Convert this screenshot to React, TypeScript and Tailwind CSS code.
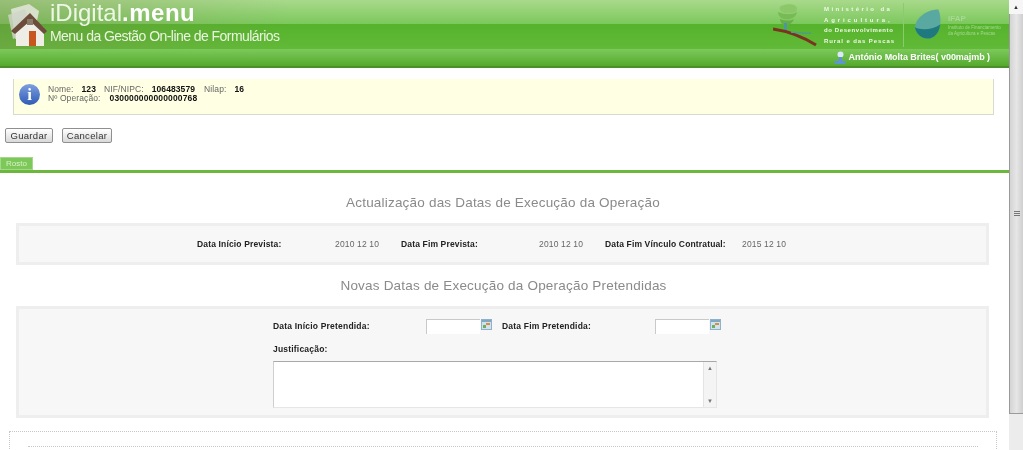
import React from "react";

const HouseLogo = () => (
  <svg width="44" height="48" viewBox="0 0 44 48" className="shrink-0">
    <path d="M6 8 L24 3 L34 10 L30 30 L10 38 Z" fill="#e4e6dc" opacity="0.85" />
    <path d="M3 14 L20 8 L26 30 L8 38 Z" fill="#cfd4c8" opacity="0.8" />
    <path d="M11 27 L11 45 L39 45 L39 27 L25 15 Z" fill="#efeee6" />
    <path d="M6 30 L25 12 L42 30 L39 33 L25 20 L10 33 Z" fill="#6d4c3c" />
    <rect x="22" y="18" width="6" height="6" fill="#8a7a6a" />
    <rect x="24" y="30" width="7" height="15" fill="#c8571f" />
  </svg>
);

const TreeLogo = () => (
  <svg width="45" height="44" viewBox="0 0 45 44" className="shrink-0">
    <path d="M8 3 C16 0 24 1 24 6 C24 10 18 11 12 10 C7 9 5 5 8 3 Z" fill="#8cc86a" />
    <path d="M5 9 C12 12 20 12 24 9 C23 15 17 17 11 16 C7 15 5 12 5 9 Z" fill="#78bb55" />
    <path d="M7 16 C12 18 18 18 21 16 C19 21 15 23 11 22 C9 21 7 19 7 16 Z" fill="#68ad4c" />
    <rect x="11" y="20" width="3" height="8" fill="#4f97a0" />
    <path d="M0 26 C14 28 30 34 43 42" stroke="#7a3320" strokeWidth="3" fill="none" />
    <path d="M18 29 C26 30 32 31 38 30" stroke="#4f9c88" strokeWidth="1.5" fill="none" />
  </svg>
);

const IfapLogo = () => (
  <svg width="30" height="33" viewBox="0 0 32 34" className="shrink-0">
    <path d="M2 20 C3 10 14 1 27 1 C31 10 30 24 22 30 C14 35 4 30 2 20 Z" fill="#5aa9a0" />
    <path d="M2 20 C10 24 22 22 29 17 C28 24 26 27 22 30 C14 35 4 30 2 20 Z" fill="#1f7a80" />
  </svg>
);

const UserIcon = () => (
  <svg width="14" height="14" viewBox="0 0 14 14" className="shrink-0">
    <circle cx="7.5" cy="3.5" r="3" fill="#dbe8f8" />
    <path d="M6 6 L9 6 L9 10 L13 10 L12 13 L2 13 L1 10 L6 10 Z" fill="#5d94d6" />
  </svg>
);

const CalendarIcon = () => (
  <svg width="11" height="11" viewBox="0 0 11 11" className="shrink-0">
    <rect x="0.5" y="0.5" width="10" height="10" fill="#cfe2ee" stroke="#8fb2c8" />
    <rect x="1" y="1" width="9" height="2" fill="#7fa8c6" />
    <rect x="5" y="4" width="4" height="2" fill="#e08a3c" />
    <rect x="2" y="6" width="3" height="3" fill="#6fae5a" />
  </svg>
);

const Button = ({ label, width }: { label: string; width: string }) => (
  <button
    className={
      width +
      " h-[15px] rounded-[2px] border border-[#8f8f8f] bg-gradient-to-b from-[#ffffff] to-[#d9d9d9] text-[9.5px] leading-none tracking-[0.3px] text-[#333]"
    }
  >
    {label}
  </button>
);

export default function App() {
  return (
    <div className="flex h-[450px] w-[1023px] overflow-hidden bg-white blur-[0.3px] font-['Liberation_Sans',Arial,sans-serif]">
      <div className="w-[1009px] shrink-0">
        {/* cabecalho */}
        <div className="flex h-[49px] items-start bg-[linear-gradient(to_right,rgba(125,140,85,0.35)_0px,rgba(125,140,85,0)_290px),linear-gradient(to_bottom,#a9d98c_0px,#7cc85c_24px,#55b22b_24px,#62ba38_49px)] pl-[5px] pr-[9px]">
          <div className="mt-[1px]">
            <HouseLogo />
          </div>
          <div className="ml-[1px] flex flex-col text-white">
            <div className="mt-[1px] h-[24px] text-[24px] leading-[24px] text-[#eef7e6]">
              iDigital<span className="font-bold tracking-[0.5px] text-white">.menu</span>
            </div>
            <div className="mt-[1px] text-[14px] leading-[20px] tracking-[-0.55px] text-[#eaf5e0]">
              Menu da Gestão On-line de Formulários
            </div>
          </div>
          <div className="ml-auto flex items-start pt-[3px]">
            <TreeLogo />
            <div className="ml-[6px] mt-[1px] w-[70px] whitespace-nowrap text-[6px] font-bold leading-[10.5px] text-[#eef8e6]">
              <div className="tracking-[2.4px]">Ministério da</div>
              <div className="tracking-[2.9px]">Agricultura,</div>
              <div className="tracking-[0.6px]">do Desenvolvimento</div>
              <div className="tracking-[0.9px]">Rural e das Pescas</div>
            </div>
            <div className="ml-[9px] h-[44px] border-l border-[#8ccb6c]" />
            <div className="ml-[9px] mt-[5px] flex items-center">
              <IfapLogo />
              <div className="ml-[5px] w-[52px] whitespace-nowrap text-[4.5px] leading-[6px] text-[#a4da92]">
                <div className="text-[8px] font-bold leading-[12px]">IFAP</div>
                <div>Instituto de Financiamento</div>
                <div>da Agricultura e Pescas</div>
              </div>
            </div>
          </div>
        </div>
        <div className="flex h-[19px] items-center justify-end border-b-2 border-[#4b8f2a] bg-gradient-to-b from-[#7cc95a] to-[#55aa2c] pr-[19px] text-[9px] font-bold tracking-[-0.05px] text-white">
          <UserIcon />
          <span className="ml-[2px]">António Molta Brites( v00majmb )</span>
        </div>

        {/* info */}
        <div className="mx-[13px] mt-[11px] flex h-[36px] w-[981px] border-x border-b border-[#d9d9d0] bg-[#ffffe3] pl-[5px] pt-[5px]">
          <div className="flex h-[21px] w-[21px] items-center justify-center rounded-full bg-gradient-to-b from-[#7f9fe0] to-[#2f5bb5] font-['Liberation_Serif',serif] text-[17px] font-bold leading-none text-white">
            i
          </div>
          <div className="ml-[8px] mt-[1px] text-[8.5px] leading-[9px] tracking-[0.1px] text-[#666]">
            <div>
              Nome:<b className="ml-[8px] text-[#111]">123</b>
              <span className="ml-[8px]">NIF/NIPC:</span>
              <b className="ml-[8px] text-[#111]">106483579</b>
              <span className="ml-[9px]">Nilap:</span>
              <b className="ml-[8px] text-[#111]">16</b>
            </div>
            <div>
              Nº Operação:<b className="ml-[9px] tracking-[0.15px] text-[#111]">030000000000000768</b>
            </div>
          </div>
        </div>

        <div className="mt-[13px] flex gap-[9px] pl-[5px]">
          <Button label="Guardar" width="w-[48px]" />
          <Button label="Cancelar" width="w-[50px]" />
        </div>

        {/* separador */}
        <div className="mt-[14px] h-[16px] border-b-[3px] border-[#6cb83c]">
          <div className="flex h-[13px] w-[33px] items-center justify-center border border-[#a5d88a] bg-[#7cc95a] text-[8px] text-[#d9f0c8]">
            Rosto
          </div>
        </div>

        <h2 className="mt-[22px] pr-[3px] text-center text-[13.5px] leading-[16px] tracking-[0.2px] text-[#8a8a8a]">
          Actualização das Datas de Execução da Operação
        </h2>

        <div className="mx-[16px] mt-[12px] flex h-[42px] w-[973px] items-center border-[3px] border-[#eeeeee] bg-[#f7f7f7] pl-[178px] text-[8.5px] tracking-[0.15px]">
          <b className="w-[138px] text-[#222]">Data Início Prevista:</b>
          <span className="w-[66px] text-[#666]">2010 12 10</span>
          <b className="w-[138px] text-[#222]">Data Fim Prevista:</b>
          <span className="w-[66px] text-[#666]">2010 12 10</span>
          <b className="w-[137px] text-[#222]">Data Fim Vínculo Contratual:</b>
          <span className="text-[#666]">2015 12 10</span>
        </div>

        <h2 className="mt-[13px] pr-[2px] text-center text-[13.5px] leading-[16px] tracking-[0.2px] text-[#8a8a8a]">
          Novas Datas de Execução da Operação Pretendidas
        </h2>

        <div className="mx-[16px] mt-[12px] h-[112px] w-[973px] border-[3px] border-[#eeeeee] bg-[#f7f7f7] pl-[254px] pt-[10px] text-[8.5px] tracking-[0.2px]">
          <div className="flex h-[15px] items-center">
            <b className="w-[153px] text-[#222]">Data Início Pretendida:</b>
            <div className="h-[15px] w-[54px] border-l border-t border-[#c9c9c9] bg-white" />
            <div className="mb-[4px] ml-[1px]">
              <CalendarIcon />
            </div>
            <b className="ml-[10px] w-[153px] text-[#222]">Data Fim Pretendida:</b>
            <div className="h-[15px] w-[54px] border-l border-t border-[#c9c9c9] bg-white" />
            <div className="mb-[4px] ml-[1px]">
              <CalendarIcon />
            </div>
          </div>
          <div className="mt-[10px] font-bold leading-[10px] text-[#222]">Justificação:</div>
          <div className="mt-[7px] flex h-[47px] w-[444px] border border-b-[#e6e6e6] border-l-[#cfcfcf] border-r-[#e6e6e6] border-t-[#a8a8a8] bg-white">
            <div className="ml-auto flex w-[13px] flex-col items-center justify-between border-l border-[#e4e4e4] bg-[#f4f4f4] py-[3px] text-[6px] leading-none text-[#777]">
              <span>▲</span>
              <span>▼</span>
            </div>
          </div>
        </div>

        <div className="ml-[9px] mt-[13px] h-[40px] w-[988px] border border-dotted border-[#c8c8c8] px-[18px] pt-[14px]">
          <div className="border-t border-dotted border-[#c8c8c8]" />
        </div>
      </div>

      {/* barra de scroll */}
      <div className="flex w-[14px] shrink-0 flex-col bg-[#ececec]">
        <div className="flex h-[14px] items-center justify-center bg-[#f6f6f6] text-[6px] text-[#333]">▲</div>
        <div className="flex h-[400px] flex-col items-center justify-center border-b border-l border-[#9a9a9a] bg-gradient-to-r from-[#d4d4d4] via-[#e6e6e6] to-[#cfcfcf]">
          <div className="h-[1px] w-[6px] bg-[#777]" />
          <div className="mt-[1px] h-[1px] w-[6px] bg-[#777]" />
          <div className="mt-[1px] h-[1px] w-[6px] bg-[#777]" />
        </div>
      </div>
    </div>
  );
}
